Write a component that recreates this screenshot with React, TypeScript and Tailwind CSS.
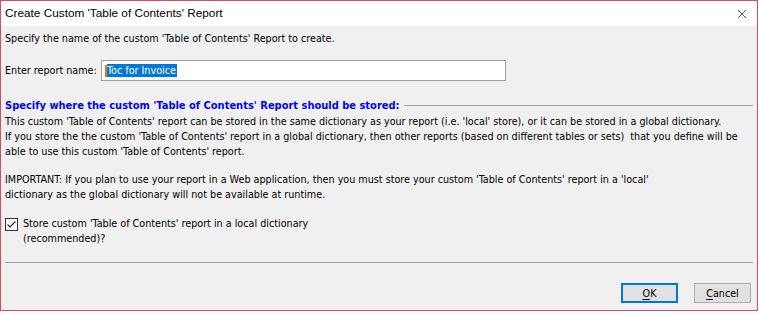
import { X } from 'lucide-react';

const body = "font-['DejaVu_Sans_Condensed','Liberation_Sans',sans-serif] text-[10.7px] leading-[15px] text-black";

function DialogButton({ label, mnemonic, isDefault }: { label: string; mnemonic: string; isDefault?: boolean }) {
  const rest = label.slice(mnemonic.length);
  return (
    <button
      type="button"
      className={`h-[20px] w-[57px] bg-[#e1e1e1] ${
        isDefault ? 'border-2 border-[#0078d7]' : 'border border-[#adadad]'
      } ${body} flex items-center justify-center`}
    >
      <span>
        <span className="underline underline-offset-2">{mnemonic}</span>
        {rest}
      </span>
    </button>
  );
}

export default function App() {
  return (
    <div className="h-[314px] w-[759px] bg-white">
      <div className="flex h-[311px] w-[758px] flex-col border border-[#e8465a] bg-[#f0f0f0]">
        <div className="flex h-[25px] shrink-0 items-center justify-between bg-white pl-[4px] pr-[8px]">
          <span className="font-['Liberation_Sans',sans-serif] text-[11.8px] text-black">
            Create Custom 'Table of Contents' Report
          </span>
          <X size={14} strokeWidth={1.2} className="text-black" />
        </div>

        <div className={`flex flex-1 flex-col px-[4px] pt-[5px] ${body}`}>
          <p>Specify the name of the custom 'Table of Contents' Report to create.</p>

          <div className="mt-[14px] flex h-[21px] items-center">
            <span className="w-[96px]">Enter report name:</span>
            <div className="flex h-[21px] w-[405px] items-center border border-[#a0a0a0] bg-white pl-[3px]">
              <span className="h-[12px] w-[2px] bg-[#e8742a]" />
              <span className="bg-[#0078d7] pr-[1px] leading-[13px] text-white">Toc for Invoice</span>
            </div>
          </div>

          <div className="mt-[17px] flex items-center gap-[4px]">
            <span className="whitespace-nowrap text-[11px] font-bold text-[#0000ff]">
              Specify where the custom 'Table of Contents' Report should be stored:
            </span>
            <span className="h-px flex-1 bg-[#a0a0a0]" />
          </div>

          <div className="mt-[1px] whitespace-pre">
            <p>This custom 'Table of Contents' report can be stored in the same dictionary as your report (i.e. 'local' store), or it can be stored in a global dictionary.</p>
            <p>If you store the the custom 'Table of Contents' report in a global dictionary, then other reports (based on different tables or sets)  that you define will be</p>
            <p>able to use this custom 'Table of Contents' report.</p>
          </div>

          <div className="mt-[13px] whitespace-pre">
            <p>IMPORTANT: If you plan to use your report in a Web application, then you must store your custom 'Table of Contents' report in a 'local'</p>
            <p>dictionary as the global dictionary will not be available at runtime.</p>
          </div>

          <label className="mt-[14px] flex items-start gap-[5px]">
            <span className="mt-[2px] flex h-[13px] w-[13px] shrink-0 items-center justify-center border border-[#333] bg-white">
              <svg width="11" height="11" viewBox="0 0 11 11" fill="none">
                <path d="M1.5 5.5 L4 8 L9.5 2.5" stroke="#222" strokeWidth="1.1" />
              </svg>
            </span>
            <span>
              Store custom 'Table of Contents' report in a local dictionary
              <br />
              (recommended)?
            </span>
          </label>

          <div className="mt-[16px] h-px bg-[#a0a0a0]" />

          <div className="mt-[20px] flex justify-end gap-[16px] pr-[2px]">
            <DialogButton label="OK" mnemonic="O" isDefault />
            <DialogButton label="Cancel" mnemonic="C" />
          </div>
        </div>
      </div>
    </div>
  );
}
